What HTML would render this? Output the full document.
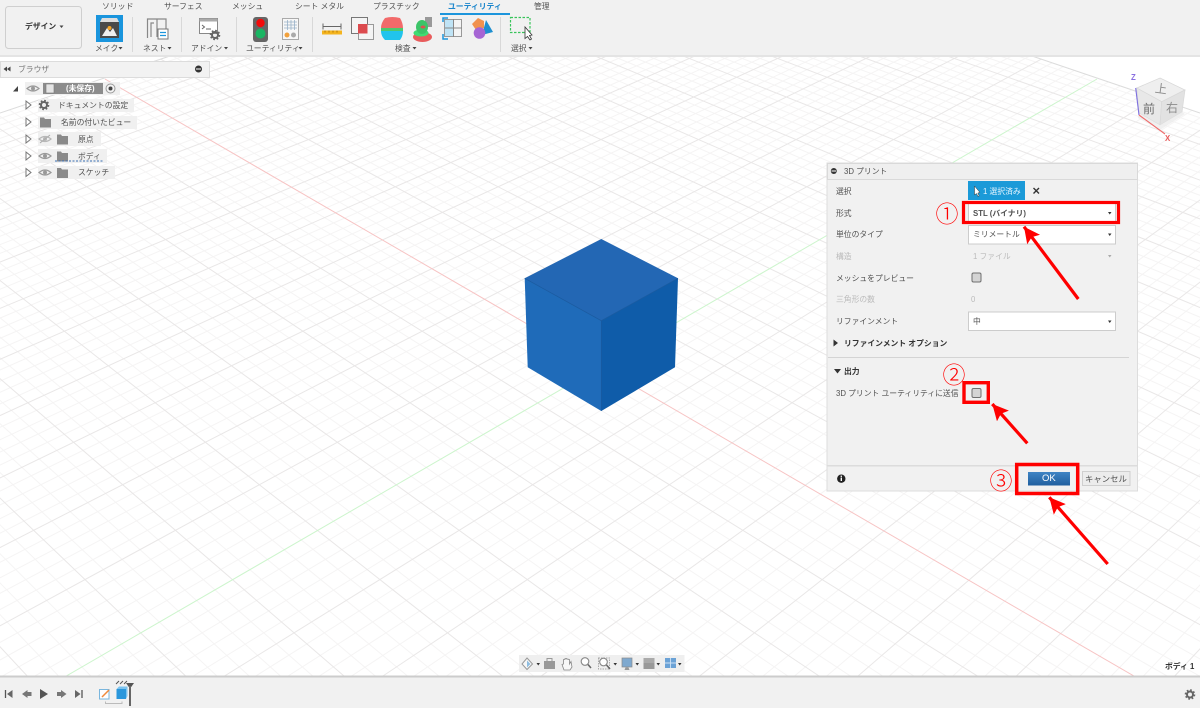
<!DOCTYPE html>
<html lang="ja">
<head>
<meta charset="utf-8">
<title>3D プリント</title>
<style>
html,body{margin:0;padding:0;background:#fff}
body{width:1200px;height:708px;position:relative;overflow:hidden;font-family:"Liberation Sans","Noto Sans CJK JP",sans-serif;color:#555;filter:blur(.3px)}
svg.layer{position:absolute;left:0;top:0}
.t{position:absolute;white-space:nowrap;font-size:7.8px;line-height:12px;height:12px;color:#505050;margin-top:1px}
.b{font-weight:700}
.g{color:#bbb}
.d{color:#333}
.n{position:absolute;font-family:"Noto Sans CJK JP",sans-serif;color:#f00;font-size:23px;line-height:26px;height:26px;width:26px;text-align:center;font-weight:300}
</style>
</head>
<body>
<svg class="layer" width="1200" height="708" viewBox="0 0 1200 708" xmlns="http://www.w3.org/2000/svg">
<defs>
<clipPath id="plane"><polygon points="0,113 601,-89 1202,113 1202,708 0,708"/></clipPath>
<path id="minor" fill="none" stroke="#f5f4f4" stroke-width="1" d="M-1271-720L25 708M-1271-720L89 708M-1271-720L122 708M-1271-720L154 708M-1271-720L187 708M-1271-720L251 708M-1271-720L284 708M-1271-720L316 708M-1271-720L349 708M-1271-720L413 708M-1271-720L446 708M-1271-720L478 708M-1271-720L511 708M-1271-720L575 708M-1271-720L608 708M-1271-720L640 708M-1271-720L673 708M-1271-720L737 708M-1271-720L770 708M-1271-720L802 708M-1271-720L835 708M-1271-720L899 708M-1271-720L932 708M-1271-720L964 708M-1271-720L997 708M-1271-720L1061 708M-1271-720L1094 708M-1271-720L1126 708M-1271-720L1159 708M-1271-720L1223 708M-1271-720L1256 708M-1271-720L1288 708M-1271-720L1321 708M-1271-720L1385 708M-1271-720L1418 708M-1271-720L1450 708M-1271-720L1483 708M-1271-720L1547 708M-1271-720L1580 708M-1271-720L1612 708M-1271-720L1645 708M-1271-720L1709 708M-1271-720L1742 708M-1271-720L1774 708M-1271-720L1807 708M-1271-720L1871 708M-1271-720L1904 708M-1271-720L1936 708M-1271-720L1969 708M-1271-720L2033 708M-1271-720L2066 708M-1271-720L2098 708M-1271-720L2131 708M-1271-720L2195 708M-1271-720L2228 708M-1271-720L2260 708M-1271-720L2293 708M-1271-720L2357 708M-1271-720L2390 708M-1271-720L2422 708M-1271-720L2455 708M-1271-720L2519 708M-1271-720L2552 708M-1271-720L2584 708M-1271-720L2617 708M-1271-720L2681 708M-1271-720L2714 708M-1271-720L2746 708M-1271-720L2779 708M-1271-720L2843 708M-1271-720L2876 708M-1271-720L2908 708M-1271-720L2941 708"/>
<path id="major" fill="none" stroke="#e9e7e7" stroke-width="1" d="M-1271-720L57 708M-1271-720L219 708M-1271-720L381 708M-1271-720L543 708M-1271-720L705 708M-1271-720L867 708M-1271-720L1029 708M-1271-720L1353 708M-1271-720L1515 708M-1271-720L1677 708M-1271-720L1839 708M-1271-720L2001 708M-1271-720L2163 708M-1271-720L2325 708M-1271-720L2487 708M-1271-720L2649 708M-1271-720L2811 708M-1271-720L2973 708"/>
<g id="eye"><path d="M-6 0Q0-5 6 0Q0 5-6 0Z" fill="none" stroke="#999" stroke-width="1.200"/><circle r="2" fill="#999"/></g>
<g id="folder"><path d="M0 1h4l1 1.500h6v8.500h-11z" fill="#8a8a8a"/></g>
<g id="gear"><circle r="3" fill="none" stroke="#666" stroke-width="2"/><circle r="4.400" fill="none" stroke="#666" stroke-width="1.800" stroke-dasharray="1.700 1.750"/></g>
<path id="exp" d="M0-4L5 0L0 4Z" fill="#fff" stroke="#777" stroke-width="1"/>
<g id="cb"><rect x=".5" y=".5" width="9" height="9" rx="1.500" fill="#d4d4d4" stroke="#6f6f6f"/></g>
<marker id="ah" markerUnits="userSpaceOnUse" markerWidth="18" markerHeight="18" refX="16" refY="8" orient="auto"><path d="M0 0L16 8L0 16L3 8Z" fill="#f00"/></marker>
<linearGradient id="okg" x1="0" y1="0" x2="0" y2="1"><stop offset="0" stop-color="#3f84c4"/><stop offset="1" stop-color="#205f9f"/></linearGradient>
</defs>

<!-- grid -->
<g clip-path="url(#plane)">
<use href="#minor"/>
<use href="#minor" transform="matrix(-1 0 0 1 1202 0)"/>
<use href="#major"/>
<use href="#major" transform="matrix(-1 0 0 1 1202 0)"/>
<path d="M105 79L1220 726" stroke="#f7c4c4" stroke-width="1" fill="none"/>
<path d="M1097 79L-20 726" stroke="#cdf5cd" stroke-width="1" fill="none"/>
</g>
<path d="M0 113L170 56M1032 56L1200 113" stroke="#dcdcdc" stroke-width="1" fill="none"/>

<!-- cube -->
<polygon points="601.300,239 678,278.300 601.300,320.700 524.700,278.300" fill="#2367b4"/>
<polygon points="524.700,278.300 601.300,320.700 601.300,411 527.700,367.300" fill="#1f6bb9"/>
<polygon points="678,278.300 601.300,320.700 601.300,411 675,367.300" fill="#0f5ca9"/>
<path d="M524.700 278.300L601.300 320.700L678 278.300M601.300 320.700V411" stroke="#1a5a9f" stroke-width=".7" fill="none"/>

<!-- view cube -->
<polygon points="1160,78 1185,90 1161.700,101.700 1136.700,88" fill="#efefef" stroke="#d8d8d8" stroke-width=".7"/>
<polygon points="1136.700,88 1161.700,101.700 1160,125 1139,113" fill="#e8e8e8" stroke="#d8d8d8" stroke-width=".7"/>
<polygon points="1185,90 1161.700,101.700 1160,125 1182,112" fill="#e2e2e2" stroke="#d8d8d8" stroke-width=".7"/>
<path d="M1139 113L1160 125L1182 112L1185 114L1160 130L1138 118Z" fill="#ececec" opacity=".8"/>
<path d="M1135.700 88L1139 115" stroke="#7d6fe0" stroke-width="1.100"/>
<path d="M1139 115L1165 134" stroke="#ef6a6a" stroke-width="1.100"/>

<!-- toolbar -->
<rect x="0" y="0" width="1200" height="55" fill="#f1f1f1"/>
<rect x="0" y="55" width="1200" height="2" fill="#e4e4e4"/>
<rect x="5.500" y="6.500" width="76" height="42" rx="3" fill="#f1f1f1" stroke="#cfcfcf"/>
<path d="M59.500 25.500h4l-2 2.500z" fill="#444"/>
<rect x="440" y="13" width="70" height="2" fill="#1c95dc"/>
<path d="M132.500 17V52M181.500 17V52M236.500 17V52M312.500 17V52M500.500 17V52" stroke="#d8d8d8" stroke-width="1"/>
<!-- make -->
<rect x="96" y="15" width="27" height="27" fill="#1a95dd"/>
<rect x="100" y="22" width="19" height="16" fill="#4a4a4a"/>
<path d="M100 22L102 18H117L119 22Z" fill="#ddd"/>
<path d="M102 36L107 28L110 32L113 28L117 36Z" fill="#eee"/>
<circle cx="109.500" cy="28" r="2" fill="#f4a52a"/>
<!-- nest -->
<path d="M147.500 38V19H157V37M151 37V23H154M157 19H166V29" fill="none" stroke="#888" stroke-width="1.200"/>
<rect x="158" y="29" width="10" height="10" fill="#fff" stroke="#777"/>
<path d="M160 32.500h6M160 35.500h6" stroke="#1c95dc" stroke-width="1.200"/>
<!-- addin -->
<rect x="199.500" y="18.500" width="18" height="15" fill="#fff" stroke="#888"/>
<rect x="199.500" y="18.500" width="18" height="3" fill="#aaa"/>
<path d="M202 25L204.500 27L202 29M206 29H211" fill="none" stroke="#666"/>
<use href="#gear" transform="translate(215,35)"/>
<!-- traffic -->
<rect x="253" y="17" width="15" height="25" rx="3" fill="#666"/>
<circle cx="260.500" cy="23" r="4.200" fill="#f40a0a"/>
<circle cx="260.500" cy="33.500" r="5" fill="#1ab563"/>
<!-- table -->
<rect x="282.500" y="18.500" width="16" height="21" fill="#f7f7f7" stroke="#aaa"/>
<path d="M284 22h13M284 25h13M284 28h13M287.500 20V30M291 20V30M294.500 20V30" stroke="#9ab2c8" stroke-width=".8"/>
<circle cx="287" cy="35" r="2.500" fill="#f2a13c"/>
<circle cx="293.500" cy="35" r="2.500" fill="#aaa"/>
<!-- ruler -->
<path d="M323 26.500H341M323 23.500V29.500M341 23.500V29.500" stroke="#666" stroke-width="1"/>
<rect x="322" y="30.500" width="20" height="4" fill="#f4b41e"/>
<path d="M325 30.500v2M329 30.500v2M333 30.500v2M337 30.500v2" stroke="#a76b00" stroke-width=".8"/>
<!-- section -->
<rect x="351.500" y="17.500" width="16" height="16" fill="#f4f4f4" stroke="#777"/>
<rect x="358.500" y="24.500" width="15" height="15" fill="#f4f4f4" stroke="#999"/>
<rect x="358" y="24" width="9.500" height="9.500" fill="#dc4a4e"/>
<!-- zebra -->
<path d="M385 18Q392 16 400 18Q403 23 403 28H381Q381 23 385 18Z" fill="#f26a6a"/>
<rect x="381" y="28" width="22" height="3" fill="#4dc86e"/>
<path d="M381 31H403Q403 36 400 40H385Q381 36 381 31Z" fill="#21c4ec"/>
<!-- curvature -->
<rect x="425" y="17" width="7" height="10" fill="#999"/>
<ellipse cx="422.500" cy="37" rx="9.500" ry="5" fill="#e85c5c"/>
<ellipse cx="421" cy="33" rx="7.500" ry="3.500" fill="#3fdc72"/>
<ellipse cx="422" cy="27" rx="6" ry="7" fill="#3cc468"/>
<ellipse cx="423" cy="27" rx="2.500" ry="1.500" fill="#d9534f"/>
<!-- split -->
<rect x="444.500" y="19.500" width="17" height="17" fill="#f4f4f4" stroke="#999"/>
<rect x="445" y="20" width="8" height="16" fill="#bfe3f5"/>
<path d="M453.500 19V37M445 28H462" stroke="#888" stroke-width="1"/>
<path d="M443 22V18H448M443 34V39H448" stroke="#1c95dc" stroke-width="1.500" fill="none"/>
<!-- shapes -->
<polygon points="478,18 484,21 484,28 476,30 472,24" fill="#f1924f"/>
<polygon points="486,20 493,32 482,35" fill="#1e8fd0"/>
<circle cx="479.500" cy="33" r="5.800" fill="#a665d4"/>
<!-- select -->
<rect x="510.500" y="17.500" width="19.500" height="15" fill="none" stroke="#38c45a" stroke-width="1.200" stroke-dasharray="2.500 1.500"/>
<path d="M525 27V38.500L527.500 36.500L530 40L531.500 39L529.500 35.500L532 35Z" fill="#fff" stroke="#333" stroke-width=".8"/>
<!-- label arrows -->
<path d="M118.500 47h4l-2 2.500zM167.500 47h4l-2 2.500zM224 47h4l-2 2.500zM298.500 47h4l-2 2.500zM412.500 47h4l-2 2.500zM528.500 47h4l-2 2.500z" fill="#444"/>

<!-- browser header -->
<rect x="0.500" y="61.500" width="209" height="16" fill="#f2f2f2" stroke="#dcdcdc"/>
<path d="M3.500 69L7 66.500V71.500ZM7 69L10.500 66.500V71.500Z" fill="#444"/>
<circle cx="198.500" cy="69" r="3.500" fill="#333"/>
<rect x="196" y="68.500" width="5" height="1" fill="#fff"/>

<!-- tree -->
<rect x="25" y="82" width="95" height="13" fill="#f0f0f0"/>
<rect x="38" y="99" width="96" height="13" fill="#f0f0f0"/>
<rect x="38" y="116" width="99" height="13" fill="#f0f0f0"/>
<rect x="38" y="132" width="63" height="14" fill="#f0f0f0"/>
<rect x="38" y="149" width="69" height="14" fill="#f0f0f0"/>
<rect x="38" y="166" width="77" height="13" fill="#f0f0f0"/>
<path d="M13 91.500H18V86Z" fill="#444"/>
<use href="#exp" transform="translate(26,105)"/>
<use href="#exp" transform="translate(26,122)"/>
<use href="#exp" transform="translate(26,139)"/>
<use href="#exp" transform="translate(26,156)"/>
<use href="#exp" transform="translate(26,172.500)"/>
<use href="#eye" transform="translate(33,88.500)"/>
<rect x="43" y="83" width="60" height="11" fill="#8c8c8c"/>
<rect x="46" y="84" width="8" height="9" fill="#e4e4e4" stroke="#777" stroke-width=".6"/>
<circle cx="110.500" cy="88.500" r="4.500" fill="#f4f4f4" stroke="#999"/>
<circle cx="110.500" cy="88.500" r="2" fill="#444"/>
<use href="#gear" transform="translate(44,105)"/>
<use href="#folder" transform="translate(40,116.500)"/>
<use href="#eye" transform="translate(45,139)" opacity=".65"/>
<path d="M40 143L50 135" stroke="#aaa"/>
<use href="#folder" transform="translate(57,133.500)"/>
<use href="#eye" transform="translate(45,156)"/>
<use href="#folder" transform="translate(57,150.500)"/>
<path d="M55 161H104" stroke="#3a6fb5" stroke-width="1" stroke-dasharray="2 1.500"/>
<use href="#eye" transform="translate(45,172.500)"/>
<use href="#folder" transform="translate(57,167)"/>

<!-- dialog -->
<rect x="827" y="163" width="310.500" height="328" fill="#f1f1f1" stroke="#dddddd"/>
<rect x="827.500" y="163.500" width="310" height="16" fill="#efefef" stroke="#d9d9d9"/>
<circle cx="833.800" cy="171" r="3" fill="#333"/>
<rect x="831.500" y="170.500" width="4.500" height="1" fill="#fff"/>
<rect x="968" y="181" width="57" height="19" fill="#1b9ad8"/>
<path d="M974.500 186V195L976.500 193.500L978 196.500L979.200 196L977.800 193L980 192.500Z" fill="#fff" stroke="#333" stroke-width=".5"/>
<path d="M1033.500 188L1039 193.500M1039 188L1033.500 193.500" stroke="#333" stroke-width="1.400"/>
<rect x="968.500" y="203.500" width="147" height="19" fill="#fff" stroke="#ccc"/>
<rect x="968.500" y="225.500" width="147" height="18.500" fill="#fff" stroke="#ccc"/>
<rect x="968.500" y="312" width="147" height="18.500" fill="#fff" stroke="#ccc"/>
<path d="M1108 212h3.500l-1.750 2.500zM1108 233.500h3.500l-1.750 2.500zM1108 320.500h3.500l-1.750 2.500z" fill="#333"/>
<path d="M1108 255h3.500l-1.750 2.500z" fill="#aaa"/>
<use href="#cb" transform="translate(971.500,272.500)"/>
<path d="M833.500 339.500L838 343L833.500 346.500Z" fill="#333"/>
<rect x="828" y="357" width="301" height="1" fill="#d4d4d4"/>
<path d="M834 369L841 369L837.500 373.500Z" fill="#333"/>
<use href="#cb" transform="translate(971.500,388)"/>
<rect x="827.500" y="465" width="310" height="1.500" fill="#dcdcdc"/>
<circle cx="841.300" cy="478.700" r="4.200" fill="#222"/>
<rect x="840.600" y="477.500" width="1.400" height="3.500" fill="#fff"/>
<rect x="840.600" y="475.600" width="1.400" height="1.300" fill="#fff"/>
<rect x="1028" y="472" width="42" height="13.500" fill="url(#okg)"/>
<rect x="1082.500" y="471.500" width="47.500" height="14" fill="#ececec" stroke="#cfcfcf"/>

<!-- red frames -->
<rect x="963.500" y="202.500" width="155" height="20" fill="none" stroke="#f00" stroke-width="3.200"/>
<rect x="964" y="382.700" width="24.300" height="19.600" fill="none" stroke="#f00" stroke-width="3.400"/>
<rect x="1016.700" y="464.500" width="61" height="29" fill="none" stroke="#f00" stroke-width="3.500"/>

<!-- arrows -->
<path d="M1078.300 299L1024 226.700" stroke="#f00" stroke-width="3.200" marker-end="url(#ah)" fill="none"/>
<path d="M1027.300 443.300L992.300 404" stroke="#f00" stroke-width="3.200" marker-end="url(#ah)" fill="none"/>
<path d="M1107.700 564L1049.300 497.300" stroke="#f00" stroke-width="3.200" marker-end="url(#ah)" fill="none"/>

<!-- nav bar -->
<rect x="519" y="655" width="165.500" height="17" fill="#efefef"/>
<path d="M527 658L532.500 664L527 669.500L522 664Z" fill="#f7f7f7" stroke="#999"/>
<path d="M527 660.500L530.500 664L527 667.500Z" fill="#8fbde0"/>
<path d="M536.500 663h3.500l-1.750 2.500z" fill="#333"/>
<rect x="544" y="661" width="11" height="8" fill="#999"/>
<path d="M547 661V658.500H552V661" fill="none" stroke="#999"/>
<path d="M564 670L562 664.500L563.500 664V659.500H565V658.500H566.500V659H568V659.500H569.500V664L571 661.500L572 667L570 670Z" fill="#f8f8f8" stroke="#888" stroke-width=".8"/>
<circle cx="585" cy="661.500" r="3.800" fill="#fff" stroke="#888" stroke-width="1.100"/>
<path d="M588 664.500L591 668" stroke="#666" stroke-width="1.500"/>
<rect x="598.500" y="658" width="11" height="11" fill="none" stroke="#aaa" stroke-dasharray="1.500 1"/>
<circle cx="603.500" cy="662" r="3.800" fill="#fff" stroke="#888" stroke-width="1.100"/>
<path d="M606.500 665L610 669" stroke="#666" stroke-width="1.500"/>
<path d="M613.500 663h3.500l-1.750 2.500z" fill="#333"/>
<rect x="622" y="658" width="10" height="9" fill="#7fa9cf" stroke="#8a8a8a" stroke-width=".7"/>
<path d="M625.500 667.500H628.500L629.500 670H624.500Z" fill="#999"/>
<path d="M635.500 663h3.500l-1.750 2.500z" fill="#333"/>
<rect x="643.500" y="658" width="11" height="11" fill="#aaa"/>
<rect x="643.500" y="663" width="11" height="6" fill="#999"/>
<path d="M656.500 663h3.500l-1.750 2.500z" fill="#333"/>
<rect x="665" y="658" width="11" height="10" fill="#6ba2d6"/>
<path d="M670.500 658V668M665 663H676" stroke="#cfe3f5" stroke-width=".9"/>
<path d="M678 663h3.500l-1.750 2.500z" fill="#333"/>

<!-- bottom bar -->
<rect x="0" y="677" width="1200" height="31" fill="#f1f1f1"/>
<rect x="0" y="675.500" width="1200" height="2" fill="#cccccc"/>
<path d="M5.500 690V698" stroke="#555" stroke-width="1.300"/>
<path d="M7 694L12.500 690V698Z" fill="#666"/>
<path d="M22 694L27.500 690V698ZM27.500 692H31.500V696H27.500Z" fill="#777"/>
<path d="M40 689L48 694L40 699Z" fill="#555"/>
<path d="M57 692H61V696H57ZM61 690L66.500 694L61 698Z" fill="#777"/>
<path d="M75 690L80.500 694L75 698Z" fill="#666"/>
<path d="M82 690V698" stroke="#555" stroke-width="1.300"/>
<rect x="99.500" y="689.500" width="9.500" height="9.500" fill="#fff" stroke="#79b6de"/>
<path d="M102 697L109 690" stroke="#f08a3c" stroke-width="1.500"/>
<rect x="116.500" y="689" width="9.500" height="10" fill="#2a97dc"/>
<path d="M116.500 689L119 686.500H127.500V696L126 699V689Z" fill="#7cc3ee"/>
<path d="M116 684L119 681M120 684L123 681M124 684L127 681" stroke="#555" stroke-width="1"/>
<path d="M126 683H134L131.200 687H128.800Z" fill="#555"/>
<rect x="129" y="686" width="2" height="20" fill="#666"/>
<path d="M105.500 701.500V703.500H122V701.500" fill="none" stroke="#bbb"/>
<use href="#gear" transform="translate(1190,694.500)"/>
</svg>

<!-- toolbar text -->
<span class="t d b" style="left:25px;top:20px;font-size:7.800px">デザイン</span>
<span class="t" style="left:102px;top:0;letter-spacing:.1px">ソリッド</span>
<span class="t" style="left:164px;top:0;">サーフェス</span>
<span class="t" style="left:232px;top:0;">メッシュ</span>
<span class="t" style="left:295px;top:0;">シート メタル</span>
<span class="t" style="left:373px;top:0;">プラスチック</span>
<span class="t b" style="left:448px;top:0;color:#1c86cc">ユーティリティ</span>
<span class="t" style="left:534px;top:0;">管理</span>
<span class="t" style="left:95px;top:42px;">メイク</span>
<span class="t" style="left:143px;top:42px;">ネスト</span>
<span class="t" style="left:191px;top:42px;">アドイン</span>
<span class="t" style="left:246px;top:42px;">ユーティリティ</span>
<span class="t" style="left:395px;top:42px;">検査</span>
<span class="t" style="left:511px;top:42px;">選択</span>

<!-- browser text -->
<span class="t" style="left:18px;top:63px;color:#777">ブラウザ</span>
<span class="t b" style="left:66px;top:82px;color:#fff">(未保存)</span>
<span class="t" style="left:58px;top:99px;">ドキュメントの設定</span>
<span class="t" style="left:61px;top:116px;">名前の付いたビュー</span>
<span class="t" style="left:78px;top:133px;">原点</span>
<span class="t" style="left:78px;top:150px;">ボディ</span>
<span class="t" style="left:78px;top:166px;">スケッチ</span>

<!-- dialog text -->
<span class="t" style="left:844px;top:165px;">3D プリント</span>
<span class="t" style="left:836px;top:185px;">選択</span>
<span class="t" style="left:983px;top:185px;color:#e8f6ff">1 選択済み</span>
<span class="t" style="left:836px;top:207px;">形式</span>
<span class="t b" style="left:973px;top:207px;">STL (バイナリ)</span>
<span class="t" style="left:836px;top:228px;">単位のタイプ</span>
<span class="t" style="left:973px;top:228px;">ミリメートル</span>
<span class="t g" style="left:836px;top:250px;">構造</span>
<span class="t g" style="left:973px;top:250px;">1 ファイル</span>
<span class="t" style="left:836px;top:272px;">メッシュをプレビュー</span>
<span class="t g" style="left:836px;top:293px;">三角形の数</span>
<span class="t g" style="left:971px;top:293px;">0</span>
<span class="t" style="left:836px;top:315px;">リファインメント</span>
<span class="t" style="left:973px;top:315px;">中</span>
<span class="t b d" style="left:844px;top:337px;">リファインメント オプション</span>
<span class="t b d" style="left:844px;top:365px;">出力</span>
<span class="t" style="left:836px;top:387px;">3D プリント ユーティリティに送信</span>
<span class="t" style="left:1042px;top:472px;color:#fff;font-size:9.500px">OK</span>
<span class="t" style="left:1085px;top:472px;font-size:8.400px">キャンセル</span>

<!-- circled numbers -->
<span class="n" style="left:934px;top:199px;">①</span>
<span class="n" style="left:941px;top:360px;">②</span>
<span class="n" style="left:988px;top:466px;">③</span>

<!-- viewcube text -->
<span class="t" style="left:1155px;top:82px;color:#8c8c8c;font-size:12px;transform:rotate(8deg)">上</span>
<span class="t" style="left:1143px;top:102px;color:#6c6c6c;font-size:12px">前</span>
<span class="t" style="left:1166px;top:101px;color:#8c8c8c;font-size:12px">右</span>
<span class="t b" style="left:1131px;top:71px;color:#8a6fe0">Z</span>
<span class="t b" style="left:1165px;top:132px;color:#e95a5a">X</span>

<span class="t b d" style="left:1165px;top:660px;">ボディ 1</span>
</body>
</html>
